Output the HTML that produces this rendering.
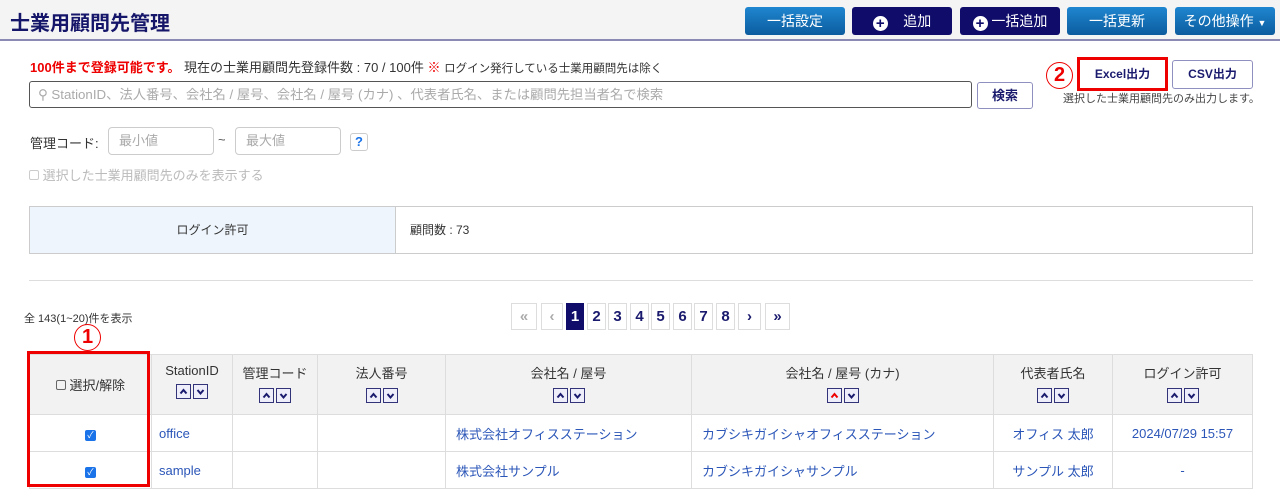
<!DOCTYPE html>
<html><head><meta charset="utf-8"><style>
*{box-sizing:border-box;margin:0;padding:0}
body{width:1280px;height:490px;overflow:hidden;background:#fff;font-family:"Liberation Sans","Noto Sans CJK JP",sans-serif;color:#333;position:relative;font-size:13px}
.a{position:absolute}
.hdr{left:0;top:0;width:1280px;height:41px;background:#f4f4f4;border-bottom:2px solid #8a8ab4}
.title{left:10px;top:7px;font-size:20px;font-weight:bold;color:#15156a}
.btn{top:7px;height:28px;width:100px;border-radius:3px;color:#fff;font-size:14px;text-align:center;line-height:28px;background:linear-gradient(#1f86d0,#0c5c9e)}
.nv{background:#0f0c6a}
.plus{display:inline-block;width:15px;height:15px;border-radius:50%;background:#fff;color:#0f0c6a;font-weight:bold;font-size:15px;line-height:15px;vertical-align:-2px;text-align:center}
.ob{border:1px solid #9090c0;border-radius:3px;background:#fff;color:#1a1a6e;font-weight:bold;font-size:12px;text-align:center}
.inp{border:1px solid #ccc;border-radius:4px;color:#aaa;font-size:13px;padding-left:10px;line-height:26px;height:28px}
.pg{top:303px;height:27px;border:1px solid #ddd;text-align:center;line-height:25px;font-weight:bold;font-size:15px;color:#1a1a6e;background:#fff}
table{position:absolute;left:29px;top:354px;border-collapse:collapse;width:1224px}
td,th{border:1px solid #ddd;font-size:13px;text-align:center}
th{background:#f2f2f2;font-weight:normal;color:#333;height:60px;vertical-align:top;padding-top:8px}
td{height:37px;color:#2b56b8;font-size:13px}
.s{display:inline-block;width:15px;height:15px;border:1px solid #33337a;background:#eeeefa;margin:6px 1px 0;vertical-align:top}
.s svg{display:block}
.cb{display:inline-block;width:11px;height:11px;border-radius:2px;background:#1a73e8;color:#fff;font-size:9px;line-height:11px}
.c{position:absolute;width:27px;height:27px;border:1px solid #e00;border-radius:50%;color:#e00;font-weight:bold;font-size:20px;text-align:center;line-height:25px}
</style></head><body>
<div class="a hdr"></div>
<div class="a title">士業用顧問先管理</div>
<div class="a btn" style="left:745px">一括設定</div>
<div class="a btn nv" style="left:852px"><span class="plus">+</span>&nbsp;&nbsp;&nbsp;&nbsp;追加</div>
<div class="a btn nv" style="left:960px"><span class="plus">+</span> 一括追加</div>
<div class="a btn" style="left:1067px">一括更新</div>
<div class="a btn" style="left:1175px">その他操作 <span style="font-size:9px">▼</span></div>

<div class="a" style="left:30px;top:57px;font-size:13px;white-space:nowrap"><b style="color:#e00">100件まで登録可能です。</b> 現在の士業用顧問先登録件数 : 70 / 100件 <b style="color:#e00">※</b> <span style="font-size:11.5px">ログイン発行している士業用顧問先は除く</span></div>
<div class="a" style="left:29px;top:81px;width:943px;height:27px;border:1px solid #555;border-radius:3px;color:#aaa;font-size:13.3px;line-height:25px;padding-left:8px">⚲ StationID、法人番号、会社名 / 屋号、会社名 / 屋号 (カナ) 、代表者氏名、または顧問先担当者名で検索</div>
<div class="a ob" style="left:977px;top:82px;width:56px;height:27px;line-height:25px;font-size:13px">検索</div>
<div class="c" style="left:1046px;top:62px">2</div>
<div class="a ob" style="left:1077px;top:57px;width:91px;height:34px;border:3px solid #e00;border-radius:0;line-height:28px">Excel出力</div>
<div class="a ob" style="left:1172px;top:60px;width:81px;height:29px;line-height:27px">CSV出力</div>
<div class="a" style="left:1063px;top:90px;font-size:11px;color:#444">選択した士業用顧問先のみ出力します。</div>

<div class="a" style="left:30px;top:133px;font-size:13px">管理コード:</div>
<div class="a inp" style="left:108px;top:127px;width:106px">最小値</div>
<div class="a" style="left:218px;top:132px;color:#555">~</div>
<div class="a inp" style="left:235px;top:127px;width:106px">最大値</div>
<div class="a" style="left:350px;top:133px;width:18px;height:18px;border:1px solid #ccc;border-radius:3px;color:#1a73e8;font-weight:bold;text-align:center;line-height:16px">?</div>
<div class="a" style="left:29px;top:165px;color:#bbb;font-size:13px"><span style="display:inline-block;width:10px;height:10px;border:1px solid #ccc;border-radius:2px"></span> 選択した士業用顧問先のみを表示する</div>

<div class="a" style="left:29px;top:206px;width:1224px;height:48px;border:1px solid #ccc"></div>
<div class="a" style="left:30px;top:207px;width:366px;height:46px;background:#eef5fc;border-right:1px solid #ccc;text-align:center;line-height:46px;font-size:12px">ログイン許可</div>
<div class="a" style="left:410px;top:207px;line-height:46px;font-size:12px">顧問数 : 73</div>
<div class="a" style="left:29px;top:280px;width:1224px;height:1px;background:#ddd"></div>

<div class="a" style="left:24px;top:310px;font-size:11px">全 143(1~20)件を表示</div>
<div class="a pg" style="left:511px;width:26px;color:#aaa">«</div>
<div class="a pg" style="left:541px;width:22px;color:#aaa">‹</div>
<div class="a pg" style="left:566px;width:18px;background:#0f0c6a;color:#fff;border-color:#0f0c6a">1</div>
<div class="a pg" style="left:587px;width:19px">2</div>
<div class="a pg" style="left:608px;width:19px">3</div>
<div class="a pg" style="left:630px;width:19px">4</div>
<div class="a pg" style="left:651px;width:19px">5</div>
<div class="a pg" style="left:673px;width:19px">6</div>
<div class="a pg" style="left:694px;width:19px">7</div>
<div class="a pg" style="left:716px;width:19px">8</div>
<div class="a pg" style="left:738px;width:23px">›</div>
<div class="a pg" style="left:765px;width:25px">»</div>

<table>
<tr><th style="width:122px;vertical-align:middle;padding:0"><span style="display:inline-block;width:10px;height:10px;border:1px solid #666;border-radius:2px"></span> 選択/解除</th>
<th style="width:81px">StationID<br><span class="s"><svg width="13" height="13"><path d="M3.5 8.5L6.5 5L9.5 8.5" stroke="#1a1a6e" stroke-width="2" fill="none"/></svg></span><span class="s"><svg width="13" height="13"><path d="M3.5 5L6.5 8.5L9.5 5" stroke="#1a1a6e" stroke-width="2" fill="none"/></svg></span></th>
<th style="width:85px">管理コード<br><span class="s"><svg width="13" height="13"><path d="M3.5 8.5L6.5 5L9.5 8.5" stroke="#1a1a6e" stroke-width="2" fill="none"/></svg></span><span class="s"><svg width="13" height="13"><path d="M3.5 5L6.5 8.5L9.5 5" stroke="#1a1a6e" stroke-width="2" fill="none"/></svg></span></th>
<th style="width:128px">法人番号<br><span class="s"><svg width="13" height="13"><path d="M3.5 8.5L6.5 5L9.5 8.5" stroke="#1a1a6e" stroke-width="2" fill="none"/></svg></span><span class="s"><svg width="13" height="13"><path d="M3.5 5L6.5 8.5L9.5 5" stroke="#1a1a6e" stroke-width="2" fill="none"/></svg></span></th>
<th style="width:246px">会社名 / 屋号<br><span class="s"><svg width="13" height="13"><path d="M3.5 8.5L6.5 5L9.5 8.5" stroke="#1a1a6e" stroke-width="2" fill="none"/></svg></span><span class="s"><svg width="13" height="13"><path d="M3.5 5L6.5 8.5L9.5 5" stroke="#1a1a6e" stroke-width="2" fill="none"/></svg></span></th>
<th style="width:302px">会社名 / 屋号 (カナ)<br><span class="s"><svg width="13" height="13"><path d="M3.5 8.5L6.5 5L9.5 8.5" stroke="#e00" stroke-width="2" fill="none"/></svg></span><span class="s"><svg width="13" height="13"><path d="M3.5 5L6.5 8.5L9.5 5" stroke="#1a1a6e" stroke-width="2" fill="none"/></svg></span></th>
<th style="width:119px">代表者氏名<br><span class="s"><svg width="13" height="13"><path d="M3.5 8.5L6.5 5L9.5 8.5" stroke="#1a1a6e" stroke-width="2" fill="none"/></svg></span><span class="s"><svg width="13" height="13"><path d="M3.5 5L6.5 8.5L9.5 5" stroke="#1a1a6e" stroke-width="2" fill="none"/></svg></span></th>
<th>ログイン許可<br><span class="s"><svg width="13" height="13"><path d="M3.5 8.5L6.5 5L9.5 8.5" stroke="#1a1a6e" stroke-width="2" fill="none"/></svg></span><span class="s"><svg width="13" height="13"><path d="M3.5 5L6.5 8.5L9.5 5" stroke="#1a1a6e" stroke-width="2" fill="none"/></svg></span></th></tr>
<tr><td><span class="cb">✓</span></td><td style="text-align:left;padding-left:7px">office</td><td></td><td></td><td style="text-align:left;padding-left:10px">株式会社オフィスステーション</td><td style="text-align:left;padding-left:10px">カブシキガイシャオフィスステーション</td><td>オフィス 太郎</td><td>2024/07/29 15:57</td></tr>
<tr><td><span class="cb">✓</span></td><td style="text-align:left;padding-left:7px">sample</td><td></td><td></td><td style="text-align:left;padding-left:10px">株式会社サンプル</td><td style="text-align:left;padding-left:10px">カブシキガイシャサンプル</td><td>サンプル 太郎</td><td>-</td></tr>
</table>
<div class="a" style="left:27px;top:351px;width:123px;height:136px;border:3px solid #e00"></div>
<div class="c" style="left:74px;top:324px">1</div>
</body></html>
